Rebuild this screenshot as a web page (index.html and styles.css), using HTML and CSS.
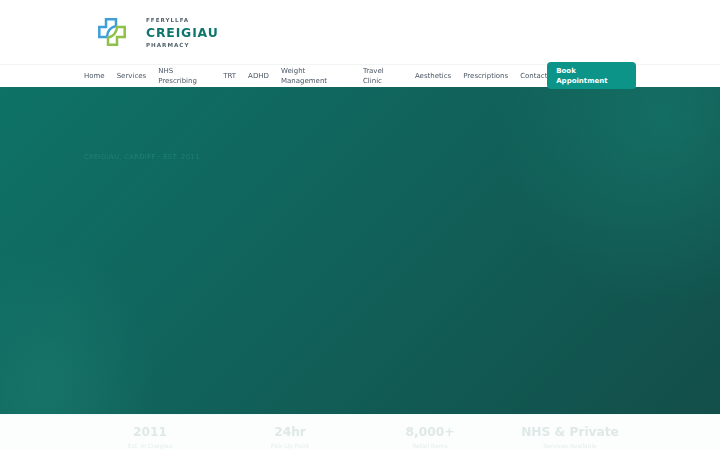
FILE: index.html
```html
<!DOCTYPE html>
<html lang="en">
<head>
<meta charset="utf-8">
<title>Fferyllfa Creigiau Pharmacy</title>
<link rel="stylesheet" href="styles.css">
</head>
<body>
<header class="brand-bar">
  <div class="brand">
    <svg class="logo" viewBox="0 0 28 28" width="28" height="28" fill="none" stroke-width="2.5">
      <path d="M18 8V1.300H8V9H1.300v10H9C9 13 13 9 18 8z" stroke="#3f9fd8"/>
      <path d="M10 19.500v7.200h9V19h7.700V9H19C19 14 15 19 10 19.500z" stroke="#8fc04a"/>
    </svg>
    <div class="brand-text">
      <span class="brand-sub">FFERYLLFA</span>
      <span class="brand-name">CREIGIAU</span>
      <span class="brand-sub">PHARMACY</span>
    </div>
  </div>
</header>
<nav class="nav">
  <div class="nav-inner">
    <a class="nav-link">Home</a>
    <a class="nav-link">Services</a>
    <a class="nav-link nav-w1">NHS Prescribing</a>
    <a class="nav-link">TRT</a>
    <a class="nav-link">ADHD</a>
    <a class="nav-link nav-w2">Weight Management</a>
    <a class="nav-link nav-w3">Travel Clinic</a>
    <a class="nav-link">Aesthetics</a>
    <a class="nav-link">Prescriptions</a>
    <a class="nav-link nav-contact">Contact</a>
    <a class="nav-cta">Book Appointment</a>
  </div>
</nav>
<section class="hero">
  <p class="eyebrow">CREIGIAU, CARDIFF · EST. 2011</p>
</section>
<section class="stats">
  <div class="stat"><strong>2011</strong><span>Est. in Creigiau</span></div>
  <div class="stat"><strong>24hr</strong><span>Pick-Up Point</span></div>
  <div class="stat"><strong>8,000+</strong><span>Retail Items</span></div>
  <div class="stat"><strong>NHS &amp; Private</strong><span>Services Available</span></div>
</section>
</body>
</html>
```
FILE: styles.css
```css
* { box-sizing: border-box; }
html, body { margin: 0; height: 450px; overflow: hidden; background: #fff; }
body { font-family: "DejaVu Sans", sans-serif; display: flex; flex-direction: column; }

.brand-bar { flex: none; height: 64px; padding: 0 84px; display: flex; align-items: center; }
.brand { display: flex; align-items: center; gap: 20px; padding-left: 14px; filter: blur(.3px); }
.logo { flex: none; }
.brand-text { display: flex; flex-direction: column; gap: 1px; }
.brand-sub { font-size: 5.6px; font-weight: 700; letter-spacing: 1px; color: #55656c; line-height: 8px; }
.brand-name { font-size: 12.4px; font-weight: 700; letter-spacing: .85px; color: #0f766e; line-height: 15px; }

.nav { flex: none; height: 23px; border-top: 1px solid #f1f5f4; padding-left: 84px; }
.nav-inner { display: flex; align-items: center; gap: 12px; height: 21px; width: 552px; }
.nav-link { font-size: 7px; line-height: 10px; color: #4b5563; white-space: nowrap; flex: none; filter: blur(.25px); }
.nav-w1 { width: 53px; white-space: normal; }
.nav-w2 { width: 70px; white-space: normal; }
.nav-w3 { width: 40px; white-space: normal; }
.nav-contact { width: 27px; margin-right: -12px; }
.nav-cta { flex: none; position: relative; width: 89px; height: 27px; padding: 4px 9px; border-radius: 4px; background: #0d9488; color: #fff; font-size: 7px; font-weight: 700; line-height: 10px; }

.hero { flex: none; height: 327px; padding: 65px 84px 0;
  background:
    radial-gradient(ellipse 110px 150px at 45px 305px, rgba(34,135,118,.38), transparent),
    radial-gradient(ellipse 170px 190px at 665px 30px, rgba(22,125,110,.55), transparent),
    linear-gradient(135deg, #0e7267 0%, #115e57 58%, #134e4a 100%);
}
.eyebrow { margin: 0; font-size: 6.75px; line-height: 10px; letter-spacing: .35px; color: #1f8073; filter: blur(.3px); }

.stats { flex: 1; background: #fbfefd; border-top: 1px solid #f0fdfa; padding: 9px 80px 0; display: grid; grid-template-columns: repeat(4, 140px); }
.stat { display: flex; flex-direction: column; align-items: center; gap: 2px; white-space: nowrap; filter: blur(.3px); }
.stat strong { font-size: 12.2px; line-height: 16px; color: #dfe9e7; }
.stat span { font-size: 5.9px; line-height: 8px; color: #e6eeec; }
```
